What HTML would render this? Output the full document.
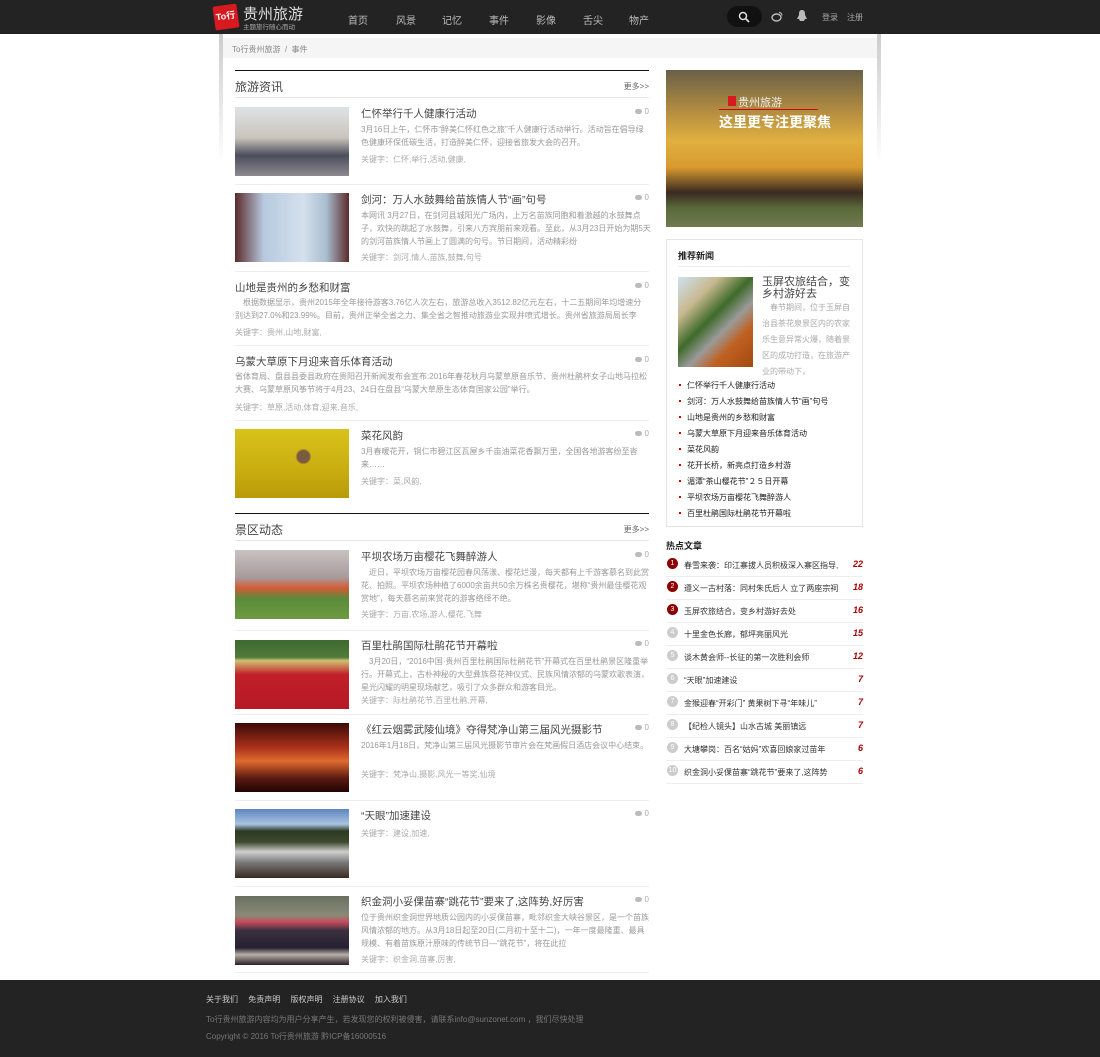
<!DOCTYPE html>
<html><head><meta charset="utf-8">
<style>
*{margin:0;padding:0;box-sizing:border-box}
body{width:1100px;height:1057px;position:relative;background:#fff;font-family:"Liberation Sans","Noto Sans CJK SC",sans-serif;overflow:hidden;color:#333}
.a{position:absolute;white-space:nowrap}
.hdr{position:absolute;left:0;top:0;width:1100px;height:34px;background:#232323}
.nav{color:#bbb;font-size:10px;top:12px}
.shadowL{position:absolute;left:219px;top:34px;width:4px;height:130px;background:linear-gradient(#ccc,rgba(255,255,255,0));}
.shadowR{position:absolute;left:877px;top:34px;width:4px;height:130px;background:linear-gradient(#ccc,rgba(255,255,255,0));}
.crumb{position:absolute;left:223px;top:38px;width:654px;height:20px;background:#f5f5f5;font-size:8px;color:#888;padding:6px 0 0 9px}
.sec{position:absolute;left:235px;width:414px;border-top:1.5px solid #111;height:28px;border-bottom:1px solid #e6e6e6}
.sec .t{position:absolute;left:0;top:7px;font-size:12px;color:#444}
.sec .m{position:absolute;right:0;top:10px;font-size:8px;color:#666}
.it{position:absolute;left:235px;width:414px;border-bottom:1px solid #eee}
.img{position:absolute;left:0;width:114px;height:69px}
.tt{position:absolute;font-size:10.5px;color:#444;white-space:nowrap}
.cm{position:absolute;right:0;font-size:8px;color:#aaa}
.cm:before{content:"";display:inline-block;width:7px;height:5px;background:#bbb;border-radius:3px;margin-right:3px}
.ds{position:absolute;font-size:8px;line-height:13px;color:#999;white-space:normal}
.kw{position:absolute;font-size:8px;color:#aaa;white-space:nowrap}
.box{position:absolute;left:666px;top:239px;width:197px;height:288px;border:1px solid #e5e5e5}
.rl{position:absolute;left:687px;font-size:8px;color:#222}
.rl:before{content:"";position:absolute;left:-8px;top:4px;width:2px;height:2px;background:#c00}
.hot{position:absolute;left:666px;width:197px;height:23px;border-bottom:1px solid #eee;font-size:8px}
.hot .n{position:absolute;left:1px;top:4px;width:11px;height:11px;border-radius:50%;background:#ccc;color:#fff;font-size:7px;text-align:center;line-height:11px}
.hot .n.r{background:#8b0000}
.hot .x{position:absolute;left:18px;top:6px;color:#333;white-space:nowrap}
.hot .c{position:absolute;right:0;top:5px;color:#a00;font-style:italic;font-weight:bold;font-size:9px}
.ft{position:absolute;left:0;top:980px;width:1100px;height:77px;background:#232323}
</style></head><body>
<div class="hdr"></div>
<div class="a" style="left:214px;top:5px;width:24px;height:24px;background:#d71920;border-radius:2px;color:#fff;font-size:9px;font-weight:bold;padding:4px 0 0 2px;transform:rotate(-8deg)">To行</div>
<div class="a" style="left:243px;top:3px;font-size:15px;color:#ddd">贵州旅游</div>
<div class="a" style="left:243px;top:21px;font-size:6.5px;color:#aaa">主题旅行随心而动</div>
<div class="a nav" style="left:348px">首页</div>
<div class="a nav" style="left:396px">风景</div>
<div class="a nav" style="left:442px">记忆</div>
<div class="a nav" style="left:489px">事件</div>
<div class="a nav" style="left:536px">影像</div>
<div class="a nav" style="left:583px">舌尖</div>
<div class="a nav" style="left:629px">物产</div>
<div class="a" style="left:727px;top:6px;width:35px;height:21px;border-radius:11px;background:#111"></div>
<svg class="a" style="left:738px;top:11px" width="12" height="12" viewBox="0 0 12 12"><circle cx="5" cy="5" r="3.5" stroke="#ddd" stroke-width="1.5" fill="none"/><path d="M7.5 7.5L11 11" stroke="#ddd" stroke-width="1.8"/></svg>
<svg class="a" style="left:771px;top:11px" width="12" height="11" viewBox="0 0 12 11"><ellipse cx="5.5" cy="6.5" rx="4.5" ry="3.5" stroke="#bbb" stroke-width="1.4" fill="none"/><path d="M8 1.5a3 3 0 0 1 3 3" stroke="#bbb" stroke-width="1.2" fill="none"/></svg>
<svg class="a" style="left:797px;top:10px" width="10" height="12" viewBox="0 0 10 12"><path d="M5 0C2 0 2 3 2 5L0 9h2l1 2h4l1-2h2L8 5C8 3 8 0 5 0z" fill="#bbb"/></svg>
<div class="a" style="left:822px;top:12px;font-size:8px;color:#aaa">登录</div>
<div class="a" style="left:847px;top:12px;font-size:8px;color:#aaa">注册</div>

<div class="shadowL"></div><div class="shadowR"></div>
<div class="crumb">To行贵州旅游 &nbsp;/&nbsp; 事件</div>

<div class="sec" style="top:70px"><div class="t">旅游资讯</div><div class="m">更多&gt;&gt;</div></div>

<div class="it" style="top:99px;height:86px">
<div class="img" style="top:8px;background:linear-gradient(180deg,#dfe3e6 0%,#c9c3bc 45%,#4a4d5c 70%,#8d8b8f 100%)"></div>
<div class="tt" style="left:126px;top:7px">仁怀举行千人健康行活动</div><div class="cm" style="top:8px">0</div>
<div class="ds" style="left:126px;top:24px;width:290px">3月16日上午，仁怀市“醉美仁怀红色之旅”千人健康行活动举行。活动旨在倡导绿色健康环保低碳生活，打造醉美仁怀，迎接省旅发大会的召开。</div>
<div class="kw" style="left:126px;top:55px">关键字：仁怀,举行,活动,健康,</div></div>

<div class="it" style="top:185px;height:87px">
<div class="img" style="top:8px;background:linear-gradient(90deg,#5a2a2a 0%,#b7c9de 25%,#d4e0ee 60%,#a9becf 80%,#5c2b2b 100%)"></div>
<div class="tt" style="left:126px;top:7px">剑河：万人水鼓舞给苗族情人节“画”句号</div><div class="cm" style="top:8px">0</div>
<div class="ds" style="left:126px;top:24px;width:290px">本网讯 3月27日，在剑河县城阳光广场内，上万名苗族同胞和着激越的水鼓舞点子，欢快的跳起了水鼓舞，引来八方宾朋前来观看。至此，从3月23日开始为期5天的剑河苗族情人节画上了圆满的句号。节日期间，活动精彩纷</div>
<div class="kw" style="left:126px;top:67px">关键字：剑河,情人,苗族,鼓舞,句号</div></div>

<div class="it" style="top:272px;height:74px">
<div class="tt" style="left:0;top:8px">山地是贵州的乡愁和财富</div><div class="cm" style="top:9px">0</div>
<div class="ds" style="left:0;top:24px;width:414px">　根据数据显示，贵州2015年全年接待游客3.76亿人次左右，旅游总收入3512.82亿元左右，十二五期间年均增速分别达到27.0%和23.99%。目前，贵州正举全省之力、集全省之智推动旅游业实现井喷式增长。贵州省旅游局局长李</div>
<div class="kw" style="left:0;top:55px">关键字：贵州,山地,财富,</div></div>

<div class="it" style="top:346px;height:75px">
<div class="tt" style="left:0;top:8px">乌蒙大草原下月迎来音乐体育活动</div><div class="cm" style="top:9px">0</div>
<div class="ds" style="left:0;top:24px;width:414px">省体育局、盘县县委县政府在贵阳召开新闻发布会宣布:2016年春花秋月乌蒙草原音乐节、贵州杜鹃杯女子山地马拉松大赛、乌蒙草原风筝节将于4月23、24日在盘县“乌蒙大草原生态体育国家公园”举行。</div>
<div class="kw" style="left:0;top:56px">关键字：草原,活动,体育,迎来,音乐,</div></div>

<div class="it" style="top:421px;height:85px;border-bottom:none">
<div class="img" style="top:8px;background:radial-gradient(circle at 60% 40%,#7a5a40 0,#7a5a40 6px,transparent 8px),linear-gradient(180deg,#d8c21a,#c9ad10 60%,#b99a0a)"></div>
<div class="tt" style="left:126px;top:7px">菜花风韵</div><div class="cm" style="top:8px">0</div>
<div class="ds" style="left:126px;top:24px;width:290px">3月春暖花开，铜仁市碧江区瓦屋乡千亩油菜花香飘万里，全国各地游客纷至沓来……</div>
<div class="kw" style="left:126px;top:55px">关键字：菜,风韵,</div></div>

<div class="sec" style="top:513px"><div class="t">景区动态</div><div class="m">更多&gt;&gt;</div></div>

<div class="it" style="top:542px;height:89px">
<div class="img" style="top:8px;background:linear-gradient(180deg,#c9c2c4 0%,#a89a9a 40%,#d35b35 55%,#5a8a3a 70%,#6e9a40 100%)"></div>
<div class="tt" style="left:126px;top:7px">平坝农场万亩樱花飞舞醉游人</div><div class="cm" style="top:8px">0</div>
<div class="ds" style="left:126px;top:24px;width:290px">　近日，平坝农场万亩樱花园春风荡漾、樱花烂漫，每天都有上千游客慕名到此赏花、拍照。平坝农场种植了6000余亩共50余万株名贵樱花，堪称“贵州最佳樱花观赏地”，每天慕名前来赏花的游客络绎不绝。</div>
<div class="kw" style="left:126px;top:67px">关键字：万亩,农场,游人,樱花,飞舞</div></div>

<div class="it" style="top:631px;height:84px">
<div class="img" style="top:9px;background:linear-gradient(180deg,#3f6a2f 0%,#4f7a3a 25%,#d0c070 30%,#c21f2a 50%,#b51a25 100%)"></div>
<div class="tt" style="left:126px;top:7px">百里杜鹃国际杜鹃花节开幕啦</div><div class="cm" style="top:8px">0</div>
<div class="ds" style="left:126px;top:24px;width:290px">　3月20日，“2016中国·贵州百里杜鹃国际杜鹃花节”开幕式在百里杜鹃景区隆重举行。开幕式上，古朴神秘的大型彝族祭花神仪式、民族风情浓郁的乌蒙欢歌表演，星光闪耀的明星现场献艺，吸引了众多群众和游客目光。</div>
<div class="kw" style="left:126px;top:64px">关键字：际杜鹃花节,百里杜鹃,开幕,</div></div>

<div class="it" style="top:715px;height:86px">
<div class="img" style="top:8px;background:linear-gradient(180deg,#3a0a08 0%,#a8301a 35%,#e06a30 55%,#5a1a10 80%,#200505 100%)"></div>
<div class="tt" style="left:126px;top:7px">《红云烟雾武陵仙境》夺得梵净山第三届风光摄影节</div><div class="cm" style="top:8px">0</div>
<div class="ds" style="left:126px;top:24px;width:290px">2016年1月18日，梵净山第三届风光摄影节审片会在梵画假日酒店会议中心结束。</div>
<div class="kw" style="left:126px;top:54px">关键字：梵净山,摄影,风光一等奖,仙境</div></div>

<div class="it" style="top:801px;height:86px">
<div class="img" style="top:8px;background:linear-gradient(180deg,#5e86c0 0%,#a9c3e0 22%,#2c3a22 32%,#3e4a2e 48%,#cfcfcf 62%,#777 78%,#3a2a20 100%)"></div>
<div class="tt" style="left:126px;top:7px">“天眼”加速建设</div><div class="cm" style="top:8px">0</div>
<div class="kw" style="left:126px;top:27px">关键字：建设,加速,</div></div>

<div class="it" style="top:887px;height:86px">
<div class="img" style="top:9px;background:linear-gradient(180deg,#6a7060 0%,#8a8a78 28%,#c44a5a 38%,#3a3040 50%,#262030 75%,#b8b0a8 85%,#2a2028 100%)"></div>
<div class="tt" style="left:126px;top:7px">织金洞小妥倮苗寨“跳花节”要来了,这阵势,好厉害</div><div class="cm" style="top:8px">0</div>
<div class="ds" style="left:126px;top:24px;width:290px">位于贵州织金洞世界地质公园内的小妥倮苗寨，毗邻织金大峡谷景区，是一个苗族风情浓郁的地方。从3月18日起至20日(二月初十至十二)，一年一度最隆重、最具规模、有着苗族原汁原味的传统节日—“跳花节”，将在此拉</div>
<div class="kw" style="left:126px;top:67px">关键字：织金洞,苗寨,厉害,</div></div>

<!-- right -->
<div class="a" style="left:666px;top:70px;width:197px;height:157px;background:linear-gradient(180deg,#6a6048 0%,#b08a40 25%,#e0b040 45%,#d89a30 62%,#3a2a20 78%,#5a6a3a 88%,#707a50 100%)"></div>
<div class="a" style="left:728px;top:96px;width:8px;height:10px;background:#d71920"></div>
<div class="a" style="left:738px;top:94px;font-size:11px;color:#eee">贵州旅游</div>
<div class="a" style="left:719px;top:109px;width:99px;height:1px;background:#c00"></div>
<div class="a" style="left:719px;top:112px;font-size:14px;color:#fff;font-weight:bold">这里更专注更聚焦</div>

<div class="box"></div>
<div class="a" style="left:678px;top:249px;font-size:9px;color:#222;font-weight:bold">推荐新闻</div>
<div class="a" style="left:678px;top:266px;width:173px;height:1px;background:#eee"></div>
<div class="a" style="left:678px;top:277px;width:75px;height:90px;background:linear-gradient(135deg,#cfe2f0 0%,#c8b890 25%,#3e6a2a 45%,#9a9a9a 60%,#c06020 75%,#a04a10 100%)"></div>
<div class="a" style="left:762px;top:276px;font-size:11px;line-height:12px;color:#444;white-space:normal;width:92px">玉屏农旅结合，变乡村游好去</div>
<div class="a" style="left:762px;top:300px;font-size:8px;line-height:16px;color:#aaa;white-space:normal;width:92px">　春节期间，位于玉屏自治县茶花泉景区内的农家乐生意异常火爆，随着景区的成功打造，在旅游产业的带动下，</div>
<div class="rl" style="top:380px">仁怀举行千人健康行活动</div>
<div class="rl" style="top:396px">剑河：万人水鼓舞给苗族情人节“画”句号</div>
<div class="rl" style="top:412px">山地是贵州的乡愁和财富</div>
<div class="rl" style="top:428px">乌蒙大草原下月迎来音乐体育活动</div>
<div class="rl" style="top:444px">菜花风韵</div>
<div class="rl" style="top:460px">花开长桥，新亮点打造乡村游</div>
<div class="rl" style="top:476px">湄潭“茶山樱花节”２５日开幕</div>
<div class="rl" style="top:492px">平坝农场万亩樱花飞舞醉游人</div>
<div class="rl" style="top:508px">百里杜鹃国际杜鹃花节开幕啦</div>

<div class="a" style="left:666px;top:539px;font-size:9px;color:#222;font-weight:bold">热点文章</div>
<div class="hot" style="top:554px"><div class="n r">1</div><div class="x">春雪来袭：印江寨拔人员积极深入寨区指导,</div><div class="c">22</div></div>
<div class="hot" style="top:577px"><div class="n r">2</div><div class="x">遵义一古村落：同村朱氏后人 立了两座宗祠</div><div class="c">18</div></div>
<div class="hot" style="top:600px"><div class="n r">3</div><div class="x">玉屏农旅结合，变乡村游好去处</div><div class="c">16</div></div>
<div class="hot" style="top:623px"><div class="n">4</div><div class="x">十里金色长廊，郁坪亮丽风光</div><div class="c">15</div></div>
<div class="hot" style="top:646px"><div class="n">5</div><div class="x">谈木黄会师--长征的第一次胜利会师</div><div class="c">12</div></div>
<div class="hot" style="top:669px"><div class="n">6</div><div class="x">“天眼”加速建设</div><div class="c">7</div></div>
<div class="hot" style="top:692px"><div class="n">7</div><div class="x">金猴迎春“开彩门” 黄果树下寻“年味儿”</div><div class="c">7</div></div>
<div class="hot" style="top:715px"><div class="n">8</div><div class="x">【纪检人镜头】山水古城 美丽镇远</div><div class="c">7</div></div>
<div class="hot" style="top:738px"><div class="n">9</div><div class="x">大塘攀岗：百名“姑妈”欢喜回娘家过苗年</div><div class="c">6</div></div>
<div class="hot" style="top:761px"><div class="n">10</div><div class="x">织金洞小妥倮苗寨“跳花节”要来了,这阵势</div><div class="c">6</div></div>

<div class="ft"></div>
<div class="a" style="left:206px;top:994px;font-size:8px;color:#ccc;word-spacing:8px">关于我们 免责声明 版权声明 注册协议 加入我们</div>
<div class="a" style="left:206px;top:1014px;font-size:8px;color:#777">To行贵州旅游内容均为用户分享产生，若发现您的权利被侵害，请联系info@sunzonet.com ，我们尽快处理</div>
<div class="a" style="left:206px;top:1031px;font-size:8px;color:#777">Copyright © 2016 To行贵州旅游 黔ICP备16000516</div>
</body></html>
